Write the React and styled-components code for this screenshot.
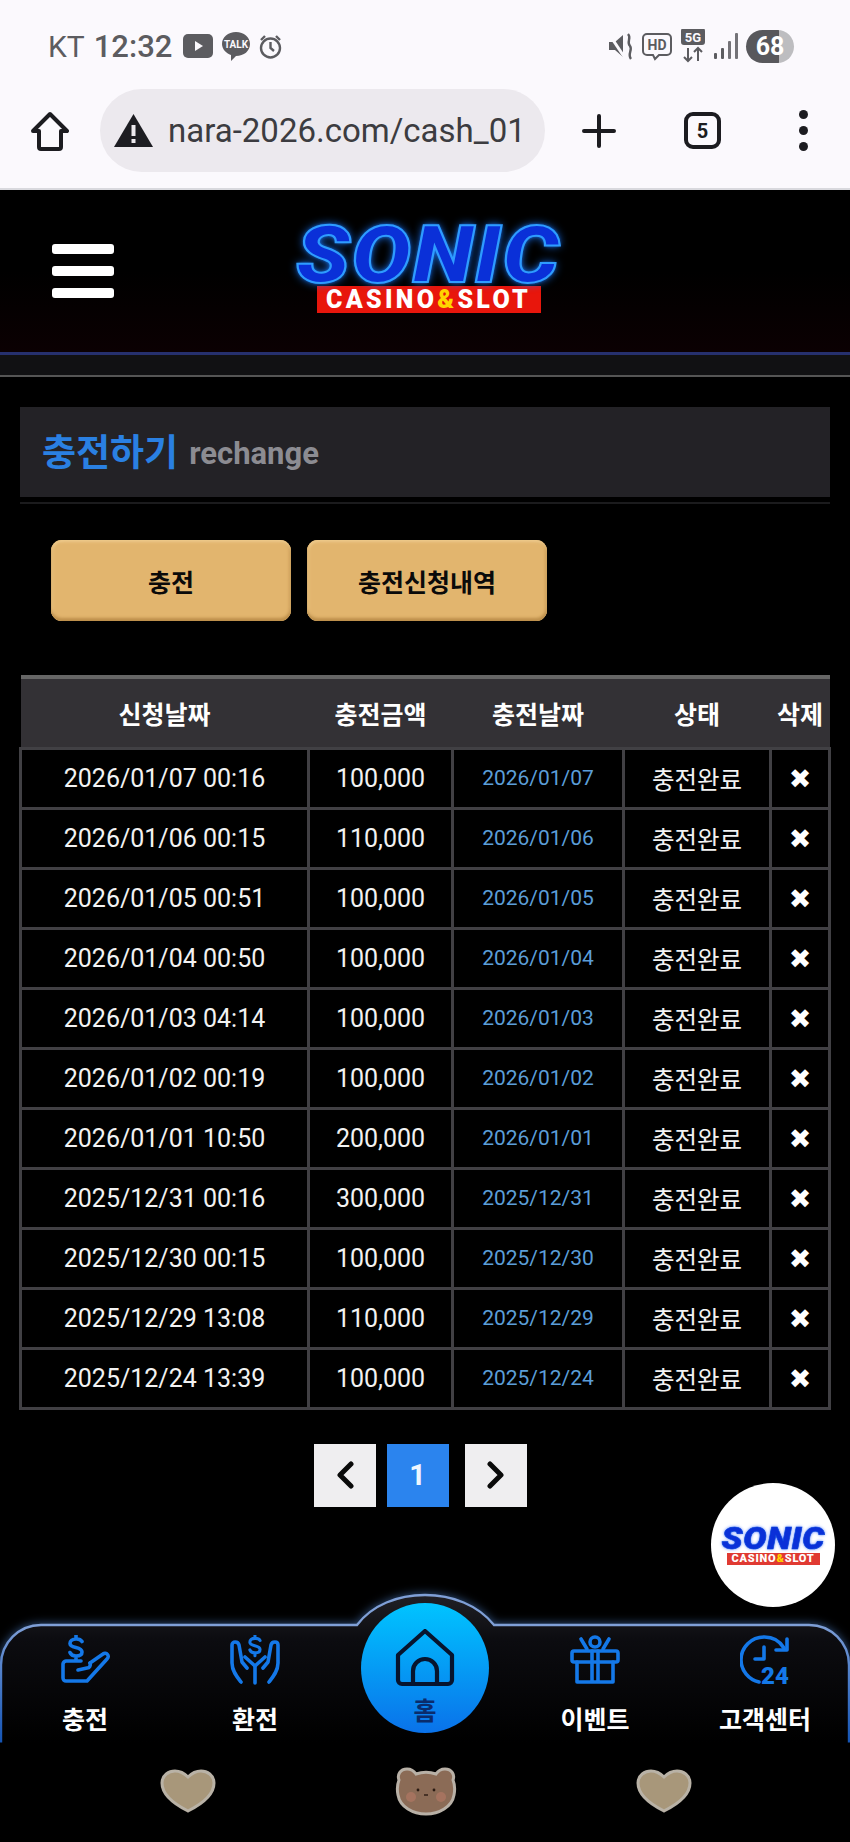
import styled, { createGlobalStyle } from 'styled-components';

const Global = createGlobalStyle`
  html, body { margin: 0; padding: 0; background: #000; }
  * { box-sizing: border-box; }
  body { font-family: Roboto, "Noto Sans CJK KR", sans-serif; }
`;

const Page = styled.div`position: relative; width: 850px; min-height: 1842px; background: #000; overflow: hidden;`;

const Chrome = styled.div`height: 190px; background: #fbf9fd; border-bottom: 2px solid #d9d9de;`;
const StatusBar = styled.div`
  height: 78px; padding: 14px 56px 0 48px; display: flex; align-items: center; justify-content: space-between;
  color: #5c5c60;`;
const StatusGroup = styled.div`display: flex; align-items: center; gap: ${p => p.$gap || 8}px;`;
const Carrier = styled.span`font-size: 30px; margin-right: 1px;`;
const Clock = styled.span`font-size: 31px; font-weight: 500; margin-right: 3px;`;
const Battery = styled.div`
  width: 48px; height: 33px; border-radius: 17px; color: #fff; font-size: 25px; font-weight: 700;
  display: flex; align-items: center; justify-content: center;
  background: linear-gradient(90deg, #58585c 68%, #bdbdc0 68%);`;

const BrowserBar = styled.div`display: flex; align-items: center; height: 110px; padding: 0 0 5px 31px;`;
const UrlPill = styled.div`
  width: 445px; height: 83px; margin: 0 37px 0 31px; padding: 0 17px 0 14px; border-radius: 42px; background: #ece9ee;
  display: flex; align-items: center; gap: 15px; overflow: hidden;`;
const UrlText = styled.span`font-size: 33px; color: #3c3c40; white-space: nowrap; overflow: hidden;`;
const TabCount = styled.div`
  width: 37px; height: 37px; margin-left: 68px; border: 4px solid #1c1c20; border-radius: 9px; color: #1c1c20;
  display: flex; align-items: center; justify-content: center; font-size: 20px; font-weight: 700;`;
const MenuDots = styled.div`
  margin-left: 78px; display: flex; flex-direction: column; gap: 7px;
  i { width: 9px; height: 9px; border-radius: 50%; background: #1c1c20; display: block; }`;

const Header = styled.header`
  height: 165px; display: flex; align-items: flex-start; padding: 54px 0 0 52px;
  background: linear-gradient(180deg, #000 50%, #0b0002 100%);
  border-bottom: 3px solid #26306e;`;
const Burger = styled.div`
  display: flex; flex-direction: column; gap: 12px; width: 62px;
  i { display: block; height: 10px; background: #fff; border-radius: 3px; }`;
const Logo = styled.div`
  display: flex; flex-direction: column; align-items: center;
  ${p => !p.$small && 'margin: -19px 0 0 184px; width: 261px;'}`;
const LogoWord = styled.div`
  font-family: Roboto, sans-serif; font-weight: 900; font-style: italic; white-space: nowrap;
  font-size: ${p => p.$small ? 31 : 80}px; letter-spacing: ${p => p.$small ? 0.6 : 1.5}px;
  line-height: ${p => p.$small ? 24 : 60}px; height: ${p => p.$small ? 24 : 60}px;
  transform: scaleX(${p => p.$small ? 1.12 : 1.11});
  color: #0a30d8;
  -webkit-text-stroke: ${p => p.$small ? '0.6px #0a45d8' : '2px #2e9cff'};
  text-shadow: ${p => p.$small ? '0 0 3px #2b5cff' : '0 0 9px #1a78ff, 0 0 3px #1a78ff'};`;
const LogoBadge = styled.div`
  font-family: Roboto, sans-serif; font-weight: 900; white-space: nowrap; color: #fff; text-align: center;
  background: ${p => p.$small ? '#e03a32' : '#e8160c'};
  margin-top: ${p => p.$small ? 2 : 1}px;
  width: ${p => p.$small ? 93 : 224}px; height: ${p => p.$small ? 12 : 27}px;
  line-height: ${p => p.$small ? 12 : 27}px; font-size: ${p => p.$small ? 11 : 25}px;
  letter-spacing: ${p => p.$small ? 0.8 : 3.3}px;
  b { color: #ffd400; font-weight: 900; }`;

const SubBar = styled.div`height: 22px; background: #111113; border-bottom: 2px solid #555;`;

const Main = styled.main`padding: 30px 20px 0;`;
const TitleWrap = styled.div`padding-bottom: 5px; border-bottom: 2px solid #1b1b1d;`;
const TitleBar = styled.div`
  height: 90px; background: #232226; padding: 0 0 4px 22px; display: flex; align-items: center; gap: 11px;`;
const TitleMain = styled.h1`margin: 0; font-size: 37px; font-weight: 700; color: #2a80e2; font-family: "Noto Sans CJK KR", sans-serif;`;
const TitleSub = styled.span`font-size: 31px; font-weight: 700; color: #8c8c92; margin-top: 6px;`;

const Tabs = styled.div`display: flex; gap: 16px; padding: 36px 0 0 31px;`;
const GoldButton = styled.button`
  width: 240px; height: 81px; border: 0; border-radius: 11px; background: #e2b56e; color: #0a0a0a;
  font-family: "Noto Sans CJK KR", sans-serif; font-size: 25px; font-weight: 700; padding: 0;
  box-shadow: inset 0 -3px 3px #bd8f4b, inset 0 2px 3px #eeca8c, inset 2px 0 3px #eac383, inset -2px 0 3px #cc9f5b;`;

const Table = styled.table`
  width: 809px; margin: 54px 0 0 -1px; border-collapse: collapse; table-layout: fixed;
  font-family: Roboto, "Noto Sans CJK KR", sans-serif;`;
const HeadCell = styled.th`
  height: 71px; background: #333135; border-top: 4px solid #666; color: #fff;
  font-size: 25px; font-weight: 700; padding: 0; font-family: "Noto Sans CJK KR", sans-serif;`;
const Cell = styled.td`
  height: 60px; background: #000; border: 3px solid #414044; text-align: center; padding: 0;
  color: ${p => p.$blue ? '#5b9ed8' : '#f2f2f2'};
  font-size: ${p => p.$blue ? 21 : 25}px;`;
const StatusText = styled.span`font-family: "Noto Sans CJK KR", sans-serif; font-size: 24.5px;`;
const DeleteMark = styled.span`font-family: "DejaVu Sans", sans-serif; font-size: 27px; color: #fff; font-weight: 700;`;

const Pager = styled.div`display: flex; justify-content: center; gap: 11px; padding: 34px 10px 0 0;`;
const PageBtn = styled.div`
  width: 62px; height: 63px; display: flex; align-items: center; justify-content: center;
  background: ${p => p.$active ? '#2b84ee' : '#efeef0'}; color: #eef6ff; font-size: 29px; font-weight: 700;
  ${p => p.$next && 'margin-left: 5px;'}`;

const Fab = styled.div`
  position: absolute; left: 711px; top: 1483px; width: 124px; height: 124px; border-radius: 50%; background: #fff;
  display: flex; align-items: center; justify-content: center; padding-top: 2px;`;

const Nav = styled.nav`
  position: relative; height: 150px; margin-top: 86px; display: grid; grid-template-columns: repeat(5, 170px);`;
const NavShape = styled.svg`
  position: absolute; left: 0; top: 0; width: 850px; height: 150px;
  filter: drop-shadow(0 0 5px rgba(90, 150, 235, 0.55)); overflow: visible;
  clip-path: inset(-12px -12px 0 -12px);`;
const NavItem = styled.div`
  position: relative; display: flex; flex-direction: column; align-items: center; padding-top: 42px;
  color: #fff; font-size: 25px; font-weight: 700; font-family: "Noto Sans CJK KR", sans-serif;
  span { margin-top: 18px; line-height: 30px; }`;
const HomeCircle = styled.div`
  position: relative; justify-self: center; width: 128px; height: 130px; margin-top: 10px; border-radius: 50%; padding-top: 26px;
  display: flex; flex-direction: column; align-items: center;
  background: linear-gradient(180deg, #00c4ff 0%, #0a72ea 100%);
  color: #0a2c6c; font-size: 25px; font-weight: 700; font-family: "Noto Sans CJK KR", sans-serif;
  span { margin-top: 8px; line-height: 28px; }`;

const Stickers = styled.div`display: flex; justify-content: center; align-items: center; gap: 179px; padding: 23px 0 0 2px;`;

const rows = [
  ['2026/01/07 00:16', '100,000', '2026/01/07'],
  ['2026/01/06 00:15', '110,000', '2026/01/06'],
  ['2026/01/05 00:51', '100,000', '2026/01/05'],
  ['2026/01/04 00:50', '100,000', '2026/01/04'],
  ['2026/01/03 04:14', '100,000', '2026/01/03'],
  ['2026/01/02 00:19', '100,000', '2026/01/02'],
  ['2026/01/01 10:50', '200,000', '2026/01/01'],
  ['2025/12/31 00:16', '300,000', '2025/12/31'],
  ['2025/12/30 00:15', '100,000', '2025/12/30'],
  ['2025/12/29 13:08', '110,000', '2025/12/29'],
  ['2025/12/24 13:39', '100,000', '2025/12/24'],
];

const BLUE = '#1478e8';

const Dollar = ({ x = 0, y = 0, s = 1 }) => (
  <g transform={`translate(${x} ${y}) scale(${s})`}>
    <path d="M13 6.5 A6 4 0 0 0 7 4 C3 4 1 6 1 8.5 C1 14 13 11 13 17 C13 20 10 21 7 21 C4 21 2 20 1 17.5 M7 0.5 V4 M7 21 V24.5" />
  </g>
);

const HandCoinIcon = () => (
  <svg width="50" height="50" viewBox="0 0 50 50" fill="none" stroke={BLUE} strokeWidth="3.6" strokeLinecap="round" strokeLinejoin="round">
    <Dollar x={9} y={0} />
    <path d="M21 26 H6 a3.5 3.5 0 0 0 -3 3 V43 a3 3 0 0 0 3 3 H27 L47 24 a3 3 0 0 0 -4 -5 L30 28" />
    <path d="M30 28 a3 3.5 0 0 1 -3 5 L18 35" />
  </svg>
);

const HandsCoinIcon = () => (
  <svg width="50" height="50" viewBox="0 0 50 50" fill="none" stroke={BLUE} strokeWidth="3.6" strokeLinecap="round" strokeLinejoin="round">
    <Dollar x={19} y={0} s={0.85} />
    <path d="M25 48 V31 L15 22 M17 33 L12 27 L9 10 C8 6 2 6 2 10 V28 C2 36 7 42 11 47" />
    <path d="M25 31 L35 22 M33 33 L38 27 L41 10 C42 6 48 6 48 10 V28 C48 36 43 42 39 47" />
  </svg>
);

const GiftIcon = () => (
  <svg width="50" height="50" viewBox="0 0 50 50" fill="none" stroke={BLUE} strokeWidth="3.6" strokeLinecap="round" strokeLinejoin="round">
    <rect x="2" y="16" width="46" height="11" rx="2" />
    <path d="M7 27 V47 H43 V27 M22 16 V47 M28 16 V47" />
    <circle cx="25" cy="7" r="5" />
    <path d="M11 4 L17 14 M39 4 L33 14" />
  </svg>
);

const Clock24Icon = () => (
  <svg width="50" height="50" viewBox="0 0 50 50" fill="none" stroke={BLUE} strokeWidth="3.6" strokeLinecap="round" strokeLinejoin="round">
    <path d="M44 13 A23 23 0 0 0 24 2 A23 23 0 0 0 1 25 A23 23 0 0 0 19 47" />
    <path d="M47 4 V15 H36 M24 12 V24 H15" />
    <text x="21" y="49" fontFamily="Roboto, sans-serif" fontWeight="900" fontSize="24" fill={BLUE} stroke="none">24</text>
  </svg>
);

const HouseIcon = () => (
  <svg width="60" height="58" viewBox="0 0 60 58" fill="none" stroke="#07142e" strokeWidth="4.2" strokeLinecap="round" strokeLinejoin="round">
    <path d="M30 2 L57 26 V51 a4 4 0 0 1 -4 4 H7 a4 4 0 0 1 -4 -4 V26 Z" />
    <path d="M18 55 V42 a12 12 0 0 1 24 0 V55" />
  </svg>
);

const Heart = () => (
  <svg width="56" height="44" viewBox="0 0 56 44">
    <path d="M28 42 C16 36 2 26 2 14 C2 6 9 2 15 2 C21 2 25 5 28 8 C31 5 35 2 41 2 C47 2 54 6 54 14 C54 26 40 36 28 42 Z" fill="#a8977a" stroke="#b9b2a6" strokeWidth="3" />
  </svg>
);

const Bear = () => (
  <svg width="62" height="50" viewBox="0 0 62 50">
    <path d="M12 3 C5 3 2 9 4 14 C2 19 2 24 3 29 C5 41 18 48 31 48 C44 48 57 41 59 29 C60 24 60 19 58 14 C60 9 57 3 50 3 C46 3 43 5 41 8 C35 6 27 6 21 8 C19 5 16 3 12 3 Z" fill="#8b6b56" stroke="#b8b0a6" strokeWidth="3" />
    <circle cx="16" cy="31" r="5" fill="#a5735f" />
    <circle cx="46" cy="31" r="5" fill="#a5735f" />
    <circle cx="23" cy="24" r="1.4" fill="#2a1a12" />
    <circle cx="39" cy="24" r="1.4" fill="#2a1a12" />
    <path d="M29 29 H33" stroke="#2a1a12" strokeWidth="1.4" />
  </svg>
);

function StatusIcons() {
  return (
    <StatusGroup $gap={8}>
      <svg width="26" height="30" viewBox="0 0 26 30" fill="#5c5c60">
        <path d="M1 11 H7 L15 4 V26 L7 19 H1 Z" />
        <path d="M1 3 L17 27" stroke="#fbf9fd" strokeWidth="3" />
        <path d="M20 3 C24 7 18 11 22 15 C25 19 19 23 23 28" fill="none" stroke="#5c5c60" strokeWidth="2.4" />
      </svg>
      <svg width="30" height="30" viewBox="0 0 30 30" fill="none" stroke="#5c5c60" strokeWidth="2">
        <path d="M5 3 H25 a4 4 0 0 1 4 4 V20 a4 4 0 0 1 -4 4 H17 L13 28 L11 24 H5 a4 4 0 0 1 -4 -4 V7 a4 4 0 0 1 4 -4 Z" />
        <text x="15" y="19" textAnchor="middle" fontFamily="Roboto, sans-serif" fontSize="14" fontWeight="700" fill="#5c5c60" stroke="none">HD</text>
      </svg>
      <svg width="26" height="34" viewBox="0 0 26 34" fill="none" stroke="#5c5c60" strokeWidth="2">
        <rect x="2" y="0" width="22" height="15" rx="2" fill="#5c5c60" />
        <text x="13" y="12.5" textAnchor="middle" fontFamily="Roboto, sans-serif" fontSize="13" fontWeight="700" fill="#fbf9fd" stroke="none">5G</text>
        <path d="M8 19 V32 M4 28 L8 32 L12 28 M18 32 V19 M14 23 L18 19 L22 23" />
      </svg>
      <svg width="24" height="26" viewBox="0 0 24 26" fill="#5c5c60">
        <rect x="0" y="20" width="3" height="6" rx="1" />
        <rect x="7" y="15" width="3" height="11" rx="1" />
        <rect x="14" y="8" width="3" height="18" rx="1" opacity="0.85" />
        <rect x="21" y="0" width="3" height="26" rx="1" opacity="0.85" />
      </svg>
      <Battery>68</Battery>
    </StatusGroup>
  );
}

export default function App() {
  return (
    <Page>
      <Global />
      <Chrome>
        <StatusBar>
          <StatusGroup>
            <Carrier>KT</Carrier>
            <Clock>12:32</Clock>
            <svg width="30" height="24" viewBox="0 0 30 24">
              <rect width="30" height="24" rx="5" fill="#5c5c60" />
              <path d="M12 7 L20 12 L12 17 Z" fill="#fbf9fd" />
            </svg>
            <svg width="30" height="30" viewBox="0 0 30 30">
              <path d="M15 1 C23 1 29 6 29 13 C29 20 23 25 15 25 L10 30 L10 24 C5 22 1 18 1 13 C1 6 7 1 15 1 Z" fill="#5c5c60" />
              <text x="15" y="17" textAnchor="middle" fontFamily="Roboto, sans-serif" fontSize="10" fontWeight="700" fill="#fbf9fd">TALK</text>
            </svg>
            <svg width="23" height="25" viewBox="0 0 23 25" fill="none" stroke="#5c5c60" strokeWidth="2.4">
              <circle cx="11.5" cy="14" r="9.5" />
              <path d="M11.5 8 V14 L15 17 M2 6 L6 2 M21 6 L17 2" />
            </svg>
          </StatusGroup>
          <StatusIcons />
        </StatusBar>
        <BrowserBar>
          <svg width="38" height="40" viewBox="0 0 38 40" fill="none" stroke="#1c1c20" strokeWidth="4" strokeLinejoin="round">
            <path d="M19 3 L36 20 H30 V36 a2 2 0 0 1 -2 2 H10 a2 2 0 0 1 -2 -2 V20 H2 Z" />
          </svg>
          <UrlPill>
            <svg width="39" height="33" viewBox="0 0 39 33" style={{ flexShrink: 0 }}>
              <path d="M19.5 0 L39 33 H0 Z" fill="#1d1d22" />
              <rect x="17.5" y="11" width="4" height="11" fill="#ece9ee" />
              <rect x="17.5" y="25" width="4" height="4" fill="#ece9ee" />
            </svg>
            <UrlText>nara-2026.com/cash_01</UrlText>
          </UrlPill>
          <svg width="34" height="34" viewBox="0 0 34 34" stroke="#1c1c20" strokeWidth="4" strokeLinecap="round">
            <path d="M17 2 V32 M2 17 H32" />
          </svg>
          <TabCount>5</TabCount>
          <MenuDots><i /><i /><i /></MenuDots>
        </BrowserBar>
      </Chrome>

      <Header>
        <Burger><i /><i /><i /></Burger>
        <Logo>
          <LogoWord>SONIC</LogoWord>
          <LogoBadge>CASINO<b>&amp;</b>SLOT</LogoBadge>
        </Logo>
      </Header>
      <SubBar />

      <Main>
        <TitleWrap>
          <TitleBar>
            <TitleMain>충전하기</TitleMain>
            <TitleSub>rechange</TitleSub>
          </TitleBar>
        </TitleWrap>

        <Tabs>
          <GoldButton>충전</GoldButton>
          <GoldButton>충전신청내역</GoldButton>
        </Tabs>

        <Table>
          <colgroup>
            <col width="288" /><col width="144" /><col width="171" /><col width="147" /><col width="59" />
          </colgroup>
          <thead>
            <tr>
              <HeadCell>신청날짜</HeadCell>
              <HeadCell>충전금액</HeadCell>
              <HeadCell>충전날짜</HeadCell>
              <HeadCell>상태</HeadCell>
              <HeadCell>삭제</HeadCell>
            </tr>
          </thead>
          <tbody>
            {rows.map(r => (
              <tr key={r[0]}>
                <Cell>{r[0]}</Cell>
                <Cell>{r[1]}</Cell>
                <Cell $blue>{r[2]}</Cell>
                <Cell><StatusText>충전완료</StatusText></Cell>
                <Cell><DeleteMark>✖</DeleteMark></Cell>
              </tr>
            ))}
          </tbody>
        </Table>

        <Pager>
          <PageBtn>
            <svg width="20" height="28" viewBox="0 0 20 28" fill="none" stroke="#0a0a0a" strokeWidth="5" strokeLinecap="round" strokeLinejoin="round"><path d="M16 3 L5 14 L16 25" /></svg>
          </PageBtn>
          <PageBtn $active>1</PageBtn>
          <PageBtn $next>
            <svg width="20" height="28" viewBox="0 0 20 28" fill="none" stroke="#0a0a0a" strokeWidth="5" strokeLinecap="round" strokeLinejoin="round"><path d="M4 3 L15 14 L4 25" /></svg>
          </PageBtn>
        </Pager>
      </Main>

      <Fab>
        <Logo $small>
          <LogoWord $small>SONIC</LogoWord>
          <LogoBadge $small>CASINO<b>&amp;</b>SLOT</LogoBadge>
        </Logo>
      </Fab>

      <Nav>
        <NavShape viewBox="0 0 850 150">
          <defs>
            <linearGradient id="navFill" x1="0" y1="0" x2="0" y2="1">
              <stop offset="0" stopColor="#202026" />
              <stop offset="0.3" stopColor="#0c0c10" />
              <stop offset="1" stopColor="#000" />
            </linearGradient>
            <linearGradient id="navLine" x1="0" y1="0" x2="0" y2="1">
              <stop offset="0.2" stopColor="#7f9fd6" />
              <stop offset="0.45" stopColor="#5a86cc" />
              <stop offset="1" stopColor="#1454b4" />
            </linearGradient>
          </defs>
          <path
            d="M1 150 V72 A40 40 0 0 1 41 32 H357 C372 12 398 2 425 2 C452 2 478 12 494 32 H809 A40 40 0 0 1 849 72 V150"
            fill="url(#navFill)" stroke="url(#navLine)" strokeWidth="2.4"
          />
        </NavShape>
        <NavItem><HandCoinIcon /><span>충전</span></NavItem>
        <NavItem><HandsCoinIcon /><span>환전</span></NavItem>
        <HomeCircle><HouseIcon /><span>홈</span></HomeCircle>
        <NavItem><GiftIcon /><span>이벤트</span></NavItem>
        <NavItem><Clock24Icon /><span>고객센터</span></NavItem>
      </Nav>

      <Stickers>
        <Heart />
        <Bear />
        <Heart />
      </Stickers>
    </Page>
  );
}
